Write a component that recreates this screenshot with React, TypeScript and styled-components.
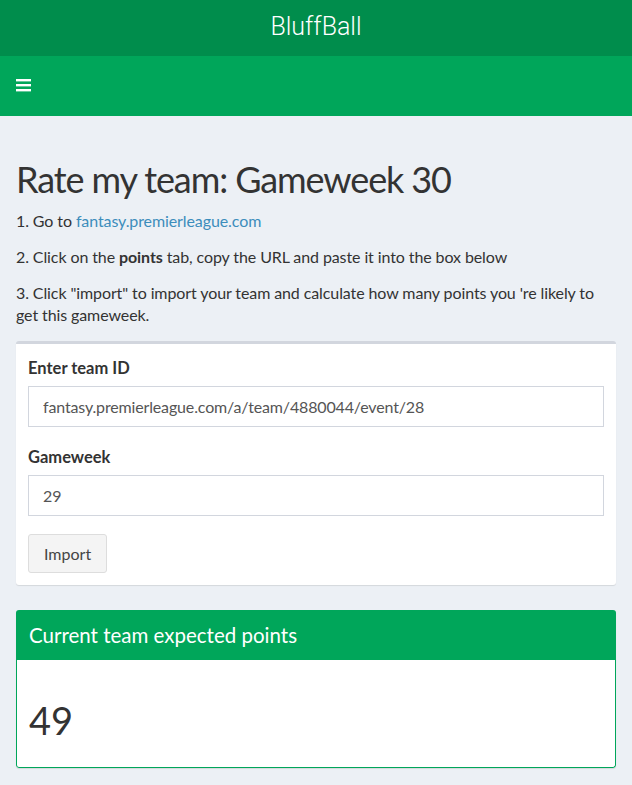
import React from "react";
import styled, { createGlobalStyle } from "styled-components";

const Global = createGlobalStyle`
  html, body { margin: 0; padding: 0; background: #ecf0f5; }
  body { font-family: Lato, "Liberation Sans", sans-serif; color: #333; font-size: 16px; }
  * { box-sizing: border-box; }
`;

const Page = styled.div`
  display: flex;
  flex-direction: column;
  min-height: 785px;
  background: #ecf0f5;
`;

const Logo = styled.header`
  height: 56px;
  background: #008d4c;
  color: #fff;
  display: flex;
  align-items: center;
  justify-content: center;
  font-family: Roboto, "Liberation Sans", sans-serif;
  font-weight: 300;
  font-size: 25px;
  padding-bottom: 4px;
`;

const NavBar = styled.nav`
  height: 60px;
  background: #00a65a;
  display: flex;
  align-items: center;
  padding-left: 16px;
`;

const Content = styled.main`
  display: flex;
  flex-direction: column;
  padding: 37px 16px 0 16px;
`;

const Title = styled.h1`
  margin: 0 0 5px 0;
  font-size: 36px;
  font-weight: 400;
  letter-spacing: -1.1px;
  line-height: 52px;
  color: #333;
`;

const Para = styled.p`
  margin: 0 0 14px 0;
  font-size: 16px;
  letter-spacing: -0.1px;
  line-height: 22px;
`;

const Link = styled.a`
  color: #3c8dbc;
  text-decoration: none;
`;

const Box = styled.section`
  background: #fff;
  border-top: 3px solid #d2d6de;
  border-radius: 3px;
  box-shadow: 0 1px 1px rgba(0, 0, 0, 0.1);
  padding: 13px 12px 12px 12px;
  display: flex;
  flex-direction: column;
  margin-top: 1px;
`;

const FormGroup = styled.div`
  display: flex;
  flex-direction: column;
  margin-bottom: 19px;
`;

const Label = styled.label`
  font-weight: 700;
  font-size: 16.5px;
  line-height: 23px;
  margin-bottom: 6px;
`;

const Input = styled.input`
  height: 41px;
  border: 1px solid #d2d6de;
  padding: 0 14px;
  font-family: inherit;
  font-size: 16px;
  letter-spacing: -0.15px;
  color: #555;
  outline: none;
  border-radius: 0;
`;

const Button = styled.button`
  align-self: flex-start;
  height: 39px;
  padding: 0 15px;
  background: #f4f4f4;
  border: 1px solid #ddd;
  border-radius: 3px;
  color: #444;
  font-family: inherit;
  font-size: 16px;
  margin-top: -1px;
`;

const ResultBox = styled.section`
  margin-top: 25px;
  border-radius: 3px;
  display: flex;
  flex-direction: column;
  overflow: hidden;
  box-shadow: 0 1px 1px rgba(0, 0, 0, 0.1);
`;

const ResultHeader = styled.div`
  height: 50px;
  background: #00a65a;
  color: #fff;
  font-size: 20.5px;
  display: flex;
  align-items: center;
  padding-left: 13px;
`;

const ResultBody = styled.div`
  height: 108px;
  background: #fff;
  border: 1px solid #00a65a;
  border-top: none;
  border-radius: 0 0 3px 3px;
  display: flex;
  align-items: center;
  padding: 12px 0 0 12px;
  font-size: 38px;
`;

const Bars = () => (
  <svg width="16" height="14" viewBox="0 0 16 14">
    <rect x="0" y="0" width="15" height="2.4" fill="#fff" />
    <rect x="0" y="5" width="15" height="2.4" fill="#fff" />
    <rect x="0" y="10" width="15" height="2.4" fill="#fff" />
  </svg>
);

export default function App() {
  return (
    <Page>
      <Global />
      <Logo>BluffBall</Logo>
      <NavBar>
        <Bars />
      </NavBar>
      <Content>
        <Title>Rate my team: Gameweek 30</Title>
        <Para>
          1. Go to <Link href="#">fantasy.premierleague.com</Link>
        </Para>
        <Para>
          2. Click on the <b>points</b> tab, copy the URL and paste it into the box below
        </Para>
        <Para>
          3. Click "import" to import your team and calculate how many points you 're likely to get this gameweek.
        </Para>
        <Box>
          <FormGroup>
            <Label>Enter team ID</Label>
            <Input defaultValue="fantasy.premierleague.com/a/team/4880044/event/28" />
          </FormGroup>
          <FormGroup>
            <Label>Gameweek</Label>
            <Input defaultValue="29" />
          </FormGroup>
          <Button>Import</Button>
        </Box>
        <ResultBox>
          <ResultHeader>Current team expected points</ResultHeader>
          <ResultBody>49</ResultBody>
        </ResultBox>
      </Content>
    </Page>
  );
}
